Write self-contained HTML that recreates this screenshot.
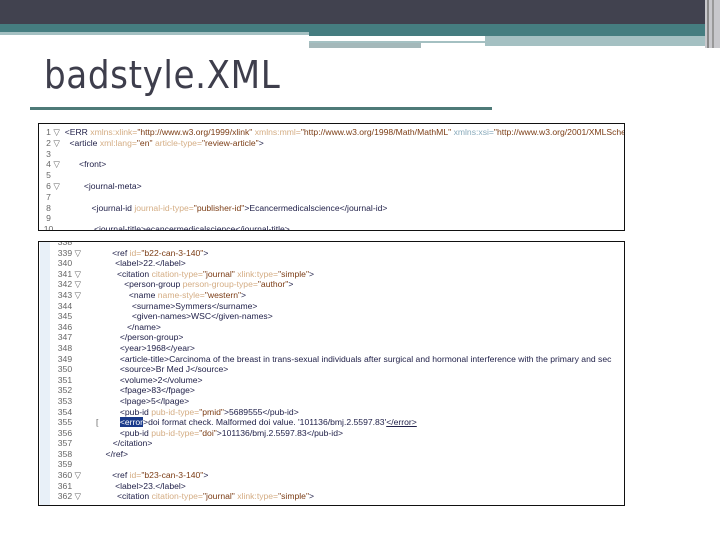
<!DOCTYPE html>
<html><head><meta charset="utf-8"><style>
body{margin:0;width:720px;height:540px;overflow:hidden;background:#fff;position:relative;font-family:"Liberation Sans",Arial,sans-serif}
.a{position:absolute}
.code{position:absolute;font-size:8.6px;color:#333;white-space:pre}
.n{color:#666}
.t{color:#22224a}
.at{color:#d4ad84}
.v{color:#7b3c14}
.x{color:#8ab}
</style></head><body>
<div class="a" style="left:0;top:0;width:720px;height:24px;background:#41424f"></div>
<div class="a" style="left:0;top:24px;width:720px;height:8px;background:#457d80"></div>
<div class="a" style="left:0;top:32px;width:309px;height:3px;background:#a4c0c2"></div>
<div class="a" style="left:309px;top:32px;width:400px;height:4px;background:#457d80"></div>
<div class="a" style="left:309px;top:41px;width:176px;height:2px;background:#a4c0c2"></div>
<div class="a" style="left:309px;top:43px;width:112px;height:5px;background:#a4b8ba"></div>
<div class="a" style="left:485px;top:36px;width:220px;height:10px;background:#a4c0c2"></div>
<div class="a" style="left:705px;top:0;width:15px;height:48px;background:#c8c8cc"></div>
<div class="a" style="left:707px;top:0;width:2px;height:48px;background:#888"></div>
<div class="a" style="left:712px;top:0;width:2px;height:48px;background:#999"></div>
<div class="a" style="left:44px;top:53px;font-size:38px;color:#3e3e4c;letter-spacing:0.6px;font-family:'DejaVu Sans Condensed','Liberation Sans Narrow','Liberation Sans',sans-serif;font-stretch:condensed">badstyle.XML</div>
<div class="a" style="left:30px;top:107px;width:462px;height:3px;background:#4e7a78"></div>

<div class="a" style="left:38px;top:123px;width:585px;height:106px;border:1px solid #111;overflow:hidden">
<div class="code" style="left:0;top:3px;line-height:10.8px"><span class="n">   1 ▽  </span><span class="t">&lt;ERR</span> <span class="at">xmlns:xlink=</span><span class="v">"http://www.w3.org/1999/xlink"</span> <span class="at">xmlns:mml=</span><span class="v">"http://www.w3.org/1998/Math/MathML"</span> <span class="x">xmlns:xsi=</span><span class="v">"http://www.w3.org/2001/XMLSchema</span>
<span class="n">   2 ▽    </span><span class="t">&lt;article</span> <span class="at">xml:lang=</span><span class="v">"en"</span> <span class="at">article-type=</span><span class="v">"review-article"</span><span class="t">&gt;</span>
<span class="n">   3</span>
<span class="n">   4 ▽        </span><span class="t">&lt;front&gt;</span>
<span class="n">   5</span>
<span class="n">   6 ▽          </span><span class="t">&lt;journal-meta&gt;</span>
<span class="n">   7</span>
<span class="n">   8                 </span><span class="t">&lt;journal-id</span> <span class="at">journal-id-type=</span><span class="v">"publisher-id"</span><span class="t">&gt;Ecancermedicalscience&lt;/journal-id&gt;</span>
<span class="n">   9</span>
<span class="n">  10                 </span><span class="t">&lt;journal-title&gt;ecancermedicalscience&lt;/journal-title&gt;</span></div>
</div>

<div class="a" style="left:38px;top:241px;width:585px;height:263px;border:1px solid #111;overflow:hidden">
<div class="a" style="left:1px;top:0;width:10px;height:263px;background:#e8f0f8"></div>
<div class="code" style="left:14px;top:-5px;line-height:10.6px"><span class="n">  338</span>
<span class="n">  339 ▽             </span><span class="t">&lt;ref</span> <span class="at">id=</span><span class="v">"b22-can-3-140"</span><span class="t">&gt;</span>
<span class="n">  340                  </span><span class="t">&lt;label&gt;22.&lt;/label&gt;</span>
<span class="n">  341 ▽               </span><span class="t">&lt;citation</span> <span class="at">citation-type=</span><span class="v">"journal"</span> <span class="at">xlink:type=</span><span class="v">"simple"</span><span class="t">&gt;</span>
<span class="n">  342 ▽                  </span><span class="t">&lt;person-group</span> <span class="at">person-group-type=</span><span class="v">"author"</span><span class="t">&gt;</span>
<span class="n">  343 ▽                    </span><span class="t">&lt;name</span> <span class="at">name-style=</span><span class="v">"western"</span><span class="t">&gt;</span>
<span class="n">  344                         </span><span class="t">&lt;surname&gt;Symmers&lt;/surname&gt;</span>
<span class="n">  345                         </span><span class="t">&lt;given-names&gt;WSC&lt;/given-names&gt;</span>
<span class="n">  346                       </span><span class="t">&lt;/name&gt;</span>
<span class="n">  347                    </span><span class="t">&lt;/person-group&gt;</span>
<span class="n">  348                    </span><span class="t">&lt;year&gt;1968&lt;/year&gt;</span>
<span class="n">  349                    </span><span class="t">&lt;article-title&gt;Carcinoma of the breast in trans-sexual individuals after surgical and hormonal interference with the primary and sec</span>
<span class="n">  350                    </span><span class="t">&lt;source&gt;Br Med J&lt;/source&gt;</span>
<span class="n">  351                    </span><span class="t">&lt;volume&gt;2&lt;/volume&gt;</span>
<span class="n">  352                    </span><span class="t">&lt;fpage&gt;83&lt;/fpage&gt;</span>
<span class="n">  353                    </span><span class="t">&lt;lpage&gt;5&lt;/lpage&gt;</span>
<span class="n">  354                    </span><span class="t">&lt;pub-id</span> <span class="at">pub-id-type=</span><span class="v">"pmid"</span><span class="t">&gt;5689555&lt;/pub-id&gt;</span>
<span class="n">  355          [         </span><span class="t"><span style="background:#1a3a8a;color:#fff">&lt;error</span>&gt;doi format check. Malformed doi value. '101136/bmj.2.5597.83'<u>&lt;/error&gt;</u></span>
<span class="n">  356                    </span><span class="t">&lt;pub-id</span> <span class="at">pub-id-type=</span><span class="v">"doi"</span><span class="t">&gt;101136/bmj.2.5597.83&lt;/pub-id&gt;</span>
<span class="n">  357                 </span><span class="t">&lt;/citation&gt;</span>
<span class="n">  358              </span><span class="t">&lt;/ref&gt;</span>
<span class="n">  359</span>
<span class="n">  360 ▽             </span><span class="t">&lt;ref</span> <span class="at">id=</span><span class="v">"b23-can-3-140"</span><span class="t">&gt;</span>
<span class="n">  361                  </span><span class="t">&lt;label&gt;23.&lt;/label&gt;</span>
<span class="n">  362 ▽               </span><span class="t">&lt;citation</span> <span class="at">citation-type=</span><span class="v">"journal"</span> <span class="at">xlink:type=</span><span class="v">"simple"</span><span class="t">&gt;</span></div>
</div>
</body></html>
